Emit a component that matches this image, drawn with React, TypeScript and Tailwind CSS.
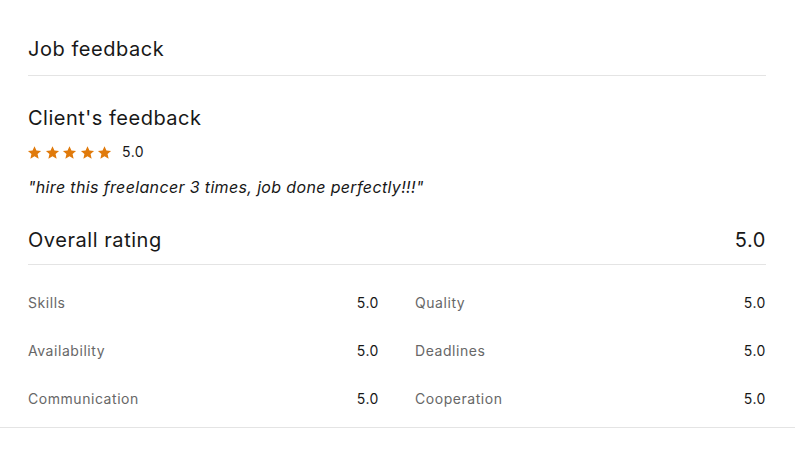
const RATINGS: [string, string][] = [
  ["Skills", "5.0"],
  ["Quality", "5.0"],
  ["Availability", "5.0"],
  ["Deadlines", "5.0"],
  ["Communication", "5.0"],
  ["Cooperation", "5.0"],
];

function Star() {
  return (
    <svg viewBox="0 0 24 24" className="h-[15px] w-[15px]" fill="#e07a0b">
      <path d="M12 1.8l3.1 6.9 7.4.7-5.6 5 1.7 7.4L12 17.9l-6.6 3.9 1.7-7.4-5.6-5 7.4-.7z" />
    </svg>
  );
}

export default function App() {
  return (
    <div
      className="w-[795px] bg-white text-[#181818]"
      style={{ fontFamily: "Inter, 'Liberation Sans', sans-serif" }}
    >
      <div className="border-b border-[#e4e4e4] pb-[18px]">
        <div className="pl-7 pr-[29px]">
          <h1 className="border-b border-[#e4e4e4] pb-3 pt-[35px] text-[20px] leading-7 tracking-[0.55px]">
            Job feedback
          </h1>
          <h2 className="mt-[28px] text-[20px] leading-7 tracking-[0.5px]">Client's feedback</h2>
          <div className="mt-3 flex h-4 items-center">
            <div className="-ml-px flex gap-[2.5px]">
              {[0, 1, 2, 3, 4].map((i) => (
                <Star key={i} />
              ))}
            </div>
            <span className="ml-[10px] text-sm tracking-[0.5px]">5.0</span>
          </div>
          <p className="mt-[15px] text-base italic leading-6 tracking-[0.35px]">
            "hire this freelancer 3 times, job done perfectly!!!"
          </p>
          <div className="mt-[27px] flex items-center justify-between border-b border-[#e4e4e4] pb-[10px] text-[20px] leading-7 tracking-[0.55px]">
            <span>Overall rating</span>
            <span>5.0</span>
          </div>
          <div className="mt-[28px] grid grid-cols-2 gap-x-9 gap-y-7">
            {RATINGS.map(([label, value]) => (
              <div
                key={label}
                className="flex items-center justify-between text-sm leading-5 tracking-[0.55px]"
              >
                <span className="text-[#676767]">{label}</span>
                <span>{value}</span>
              </div>
            ))}
          </div>
        </div>
      </div>
    </div>
  );
}
